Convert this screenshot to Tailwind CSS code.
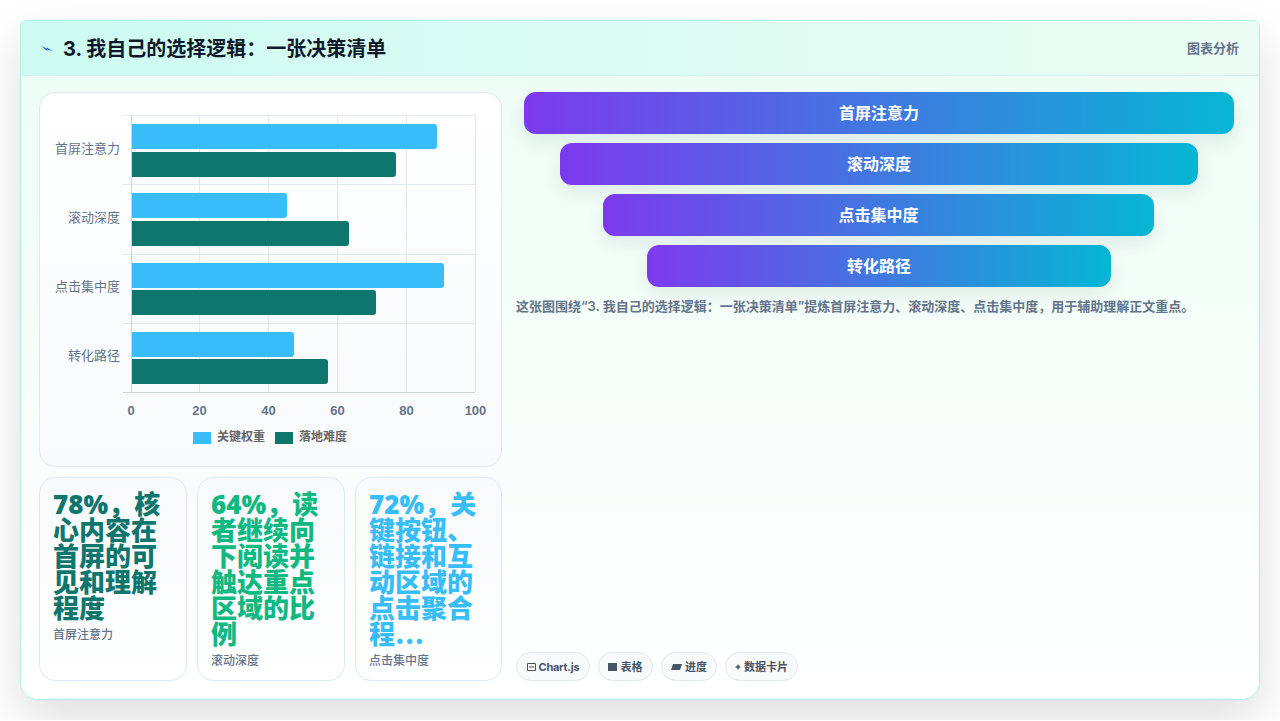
<!DOCTYPE html>
<html lang="zh" class="overflow-hidden bg-white">
  <head>
    <meta charset="UTF-8" />
    <title>图表分析</title>
    <script src="https://cdn.jsdelivr.net/npm/@tailwindcss/browser@4"></script>
  </head>
  <body class="bg-white h-[720px] overflow-hidden p-5 font-['Inter','Noto_Sans_CJK_SC',sans-serif]">
    <section class="w-[1240px] h-[680px] rounded-t-[6px] rounded-b-[18px] border border-[#b2f0e4] flex flex-col bg-gradient-to-b from-[#ecfdf5] to-white shadow-[0_20px_50px_rgba(0,0,0,0.13)]">
      <!-- Header -->
      <header class="h-[55px] shrink-0 flex items-center justify-between pl-5 pr-5 pt-[2px] rounded-t-[5px] border-b border-[#d5f3ee] bg-gradient-to-r from-[#ccfbf1] to-[#ecfdf5]">
        <h2 class="flex items-center gap-[10px] text-xl font-bold text-[#0f172a]">
          <svg class="w-3 h-[6px]" viewBox="0 0 12 6"><path d="M0 0 L6 2.4 L5.2 1.2 L12 5 L6 3.6 L6.8 5.2 Z" fill="#2563eb" /></svg>
          <span>3. 我自己的选择逻辑：一张决策清单</span>
        </h2>
        <span class="text-[13px] font-semibold text-[#64748b]">图表分析</span>
      </header>

      <div class="flex-1 flex gap-[14px] pl-[18px] pr-[17px] pt-4 pb-[18px]">
        <!-- Left column -->
        <div class="w-[463px] shrink-0 flex flex-col gap-[10px]">
          <div class="h-[375px] shrink-0 rounded-2xl border border-[#e2e8f0] bg-gradient-to-b from-white to-[#f8fafc]">
            <svg width="461" height="373" viewBox="40 93 461 373" class="font-['Liberation_Sans','Noto_Sans_CJK_SC',sans-serif]">
              <g stroke="#e2e8f0" stroke-width="1">
                <path d="M199.5 115V392M268.5 115V392M337.5 115V392M406.5 115V392M475.5 115V392" />
                <path d="M123 115.5H475M123 184.5H475M123 254.5H475M123 323.5H475" />
              </g>
              <g fill="#38bdf8">
                <path d="M131 124H434a3 3 0 0 1 3 3V146a3 3 0 0 1-3 3H131Z" />
                <path d="M131 193H284a3 3 0 0 1 3 3V215a3 3 0 0 1-3 3H131Z" />
                <path d="M131 263H441a3 3 0 0 1 3 3V285a3 3 0 0 1-3 3H131Z" />
                <path d="M131 332H291a3 3 0 0 1 3 3V354a3 3 0 0 1-3 3H131Z" />
              </g>
              <g fill="#0f766e">
                <path d="M131 152H393a3 3 0 0 1 3 3V174a3 3 0 0 1-3 3H131Z" />
                <path d="M131 221H346a3 3 0 0 1 3 3V243a3 3 0 0 1-3 3H131Z" />
                <path d="M131 290H373a3 3 0 0 1 3 3V312a3 3 0 0 1-3 3H131Z" />
                <path d="M131 359H325a3 3 0 0 1 3 3V381a3 3 0 0 1-3 3H131Z" />
              </g>
              <path d="M131.5 115V392M123 392.5H475" stroke="#cbd5e1" stroke-width="1" />
              <g font-size="13" fill="#64748b" text-anchor="end">
                <text x="120" y="153">首屏注意力</text>
                <text x="120" y="222">滚动深度</text>
                <text x="120" y="291">点击集中度</text>
                <text x="120" y="360">转化路径</text>
              </g>
              <g font-size="13" font-weight="700" fill="#64748b" text-anchor="middle">
                <text x="131" y="415">0</text>
                <text x="199.5" y="415">20</text>
                <text x="268.5" y="415">40</text>
                <text x="337.5" y="415">60</text>
                <text x="406.5" y="415">80</text>
                <text x="475.5" y="415">100</text>
              </g>
              <rect x="193" y="432" width="18" height="12" fill="#38bdf8" />
              <rect x="275" y="432" width="18" height="12" fill="#0f766e" />
              <g font-size="12" font-weight="700" fill="#666">
                <text x="217" y="441">关键权重</text>
                <text x="299" y="441">落地难度</text>
              </g>
            </svg>
          </div>

          <div class="flex-1 grid grid-cols-[148px_148px_147px] gap-[10px]">
            <div class="rounded-2xl border border-[#dbeafe] bg-gradient-to-b from-[#f8fafc] to-white pt-[13px] px-[13px]">
              <div class="text-[26px] leading-[26px] font-black text-[#0f766e]"><span class="font-['Noto_Sans']">78%</span>，核心内容在首屏的可见和理解程度</div>
              <div class="mt-[5px] text-xs font-medium text-[#64748b]">首屏注意力</div>
            </div>
            <div class="rounded-2xl border border-[#dbeafe] bg-gradient-to-b from-[#f8fafc] to-white pt-[13px] px-[13px]">
              <div class="text-[26px] leading-[26px] font-black text-[#10b981]"><span class="font-['Noto_Sans']">64%</span>，读者继续向下阅读并触达重点区域的比例</div>
              <div class="mt-[5px] text-xs font-medium text-[#64748b]">滚动深度</div>
            </div>
            <div class="rounded-2xl border border-[#dbeafe] bg-gradient-to-b from-[#f8fafc] to-white pt-[13px] px-[13px]">
              <div class="text-[26px] leading-[26px] font-black text-[#38bdf8]"><span class="font-['Noto_Sans']">72%</span>，关键按钮、链接和互动区域的点击聚合程...</div>
              <div class="mt-[5px] text-xs font-medium text-[#64748b]">点击集中度</div>
            </div>
          </div>
        </div>

        <!-- Right column -->
        <div class="flex-1 flex flex-col">
          <div class="flex flex-col items-center gap-[9px]">
            <div class="w-[710px] h-[42px] rounded-xl flex items-center justify-center text-base font-bold text-white bg-[linear-gradient(90deg,#7c3aed,#06b6d4)] shadow-[0_8px_18px_rgba(15,23,42,0.08)]">首屏注意力</div>
            <div class="w-[638px] h-[42px] rounded-xl flex items-center justify-center text-base font-bold text-white bg-[linear-gradient(90deg,#7c3aed,#06b6d4)] shadow-[0_8px_18px_rgba(15,23,42,0.08)]">滚动深度</div>
            <div class="w-[551px] mr-px h-[42px] rounded-xl flex items-center justify-center text-base font-bold text-white bg-[linear-gradient(90deg,#7c3aed,#06b6d4)] shadow-[0_8px_18px_rgba(15,23,42,0.08)]">点击集中度</div>
            <div class="w-[464px] h-[42px] rounded-xl flex items-center justify-center text-base font-bold text-white bg-[linear-gradient(90deg,#7c3aed,#06b6d4)] shadow-[0_8px_18px_rgba(15,23,42,0.08)]">转化路径</div>
          </div>
          <p class="mt-[10px] text-[13px] leading-[18px] font-semibold text-[#64748b]">这张图围绕“3. 我自己的选择逻辑：一张决策清单”提炼首屏注意力、滚动深度、点击集中度，用于辅助理解正文重点。</p>
          <div class="mt-auto flex gap-2">
            <span class="h-[29px] px-[9.5px] pt-px rounded-full border border-[#e2e8f0] bg-[#f8fafc] flex items-center gap-[3px] text-[11px] font-bold tracking-[-0.25px] text-[#475569]">
              <svg class="w-[9px] h-2" viewBox="0 0 9 8"><path d="M.5.5h8v7h-8zM2 4h5" fill="none" stroke="#475569" /></svg>
              Chart.js
            </span>
            <span class="h-[29px] px-[9.5px] pt-px rounded-full border border-[#e2e8f0] bg-[#f8fafc] flex items-center gap-[3px] text-[11px] font-bold text-[#475569]">
              <svg class="w-[9px] h-2" viewBox="0 0 9 8"><path d="M0 0h9v8H0z" fill="#475569" /></svg>
              表格
            </span>
            <span class="h-[29px] px-[9px] pt-px rounded-full border border-[#e2e8f0] bg-[#f8fafc] flex items-center gap-[3px] text-[11px] font-bold text-[#475569]">
              <svg class="w-[11px] h-[6px]" viewBox="0 0 11 6"><path d="M2 0h9L9 6H0z" fill="#475569" /></svg>
              进度
            </span>
            <span class="h-[29px] px-[9px] pt-px rounded-full border border-[#e2e8f0] bg-[#f8fafc] flex items-center gap-[3px] text-[11px] font-bold text-[#475569]">
              <svg class="w-[6px] h-[6px]" viewBox="0 0 6 6"><path d="M3 0L4 2 6 3 4 4 3 6 2 4 0 3 2 2z" fill="#475569" /></svg>
              数据卡片
            </span>
          </div>
        </div>
      </div>
    </section>
  </body>
</html>
